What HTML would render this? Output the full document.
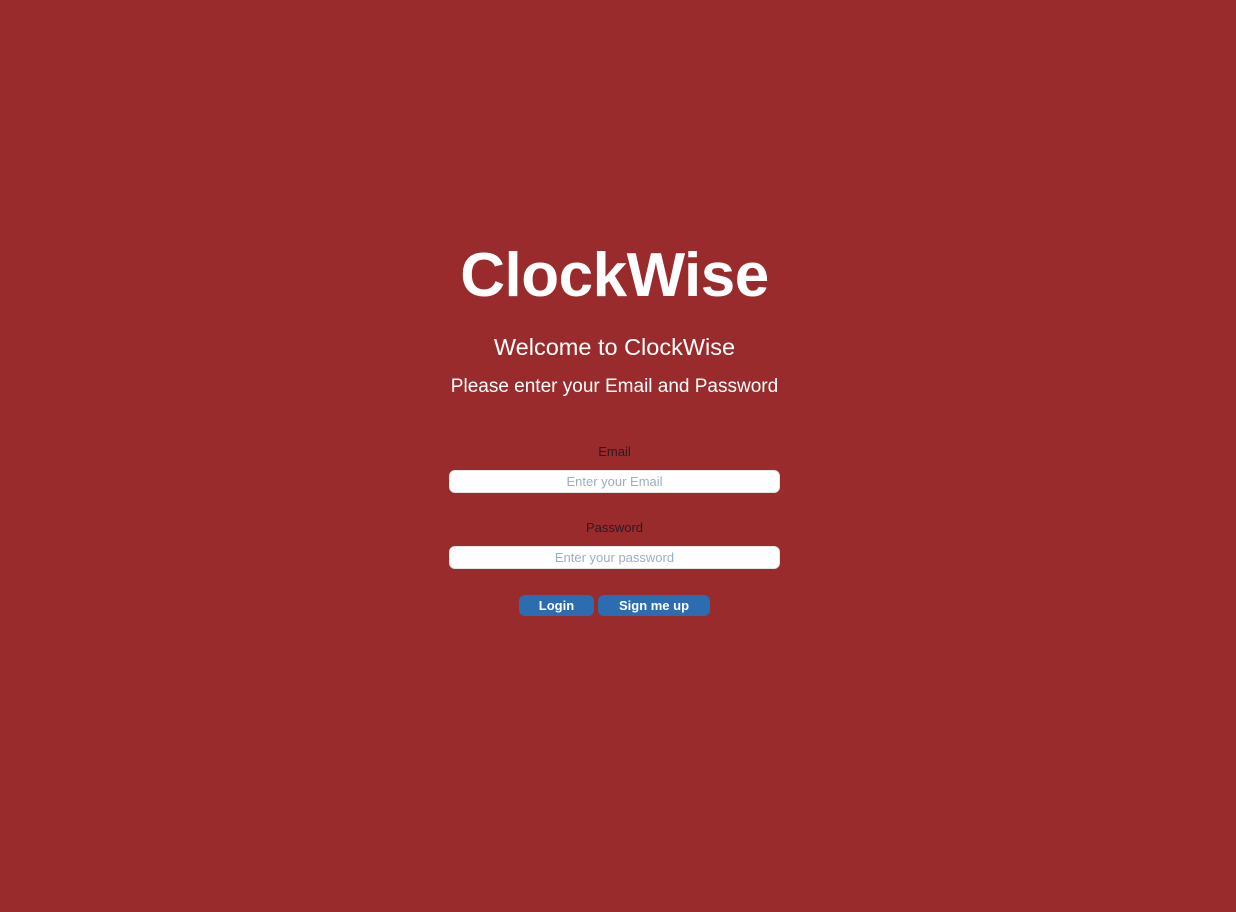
<!DOCTYPE html>
<html><head><style>
body{margin:0;width:1236px;height:912px;background:#9a2b2c;font-family:"Liberation Sans",sans-serif;position:relative;overflow:hidden}
.c{position:absolute;left:0;width:1229px;text-align:center;margin:0}
.in{position:absolute;left:449px;width:331px;height:23px;background:#fff;border-radius:6px;box-sizing:border-box;border:1px solid #e4e4e4;color:#9aaec4;font-size:13px;line-height:21px;text-align:center}
.b{position:absolute;top:595px;height:21px;background:#2c6cb0;border-radius:6px;color:#fff;font-weight:bold;font-size:13px;line-height:21px;text-align:center}
</style></head><body>
<div class="c" style="top:238px;font-size:62px;font-weight:bold;color:#fff;line-height:76px;letter-spacing:-0.5px">ClockWise</div>
<div class="c" style="top:332px;font-size:23.5px;color:#fff;line-height:30px">Welcome to ClockWise</div>
<div class="c" style="top:374px;font-size:19px;color:#fff;line-height:26px">Please enter your Email and Password</div>
<div class="c" style="top:444px;font-size:13px;color:#2a1a22;line-height:16px">Email</div>
<div class="in" style="top:470px">Enter your Email</div>
<div class="c" style="top:520px;font-size:13px;color:#2a1a22;line-height:16px">Password</div>
<div class="in" style="top:546px">Enter your password</div>
<div class="b" style="left:519px;width:75px">Login</div>
<div class="b" style="left:598px;width:112px">Sign me up</div>
</body></html>
